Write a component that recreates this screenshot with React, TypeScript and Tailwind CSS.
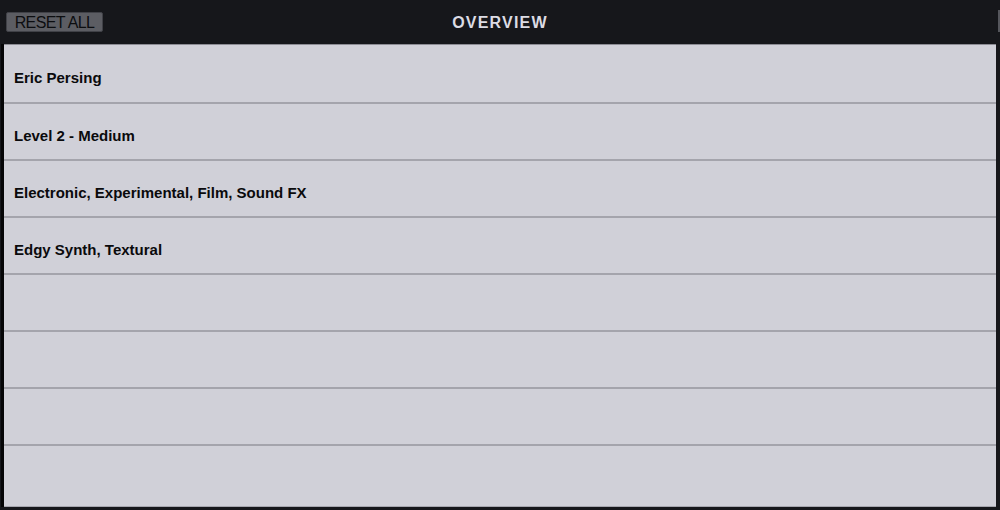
const ROWS = [
  "Eric Persing",
  "Level 2 - Medium",
  "Electronic, Experimental, Film, Sound FX",
  "Edgy Synth, Textural",
  "",
  "",
  "",
  "",
];

export default function App() {
  return (
    <div
      className="w-[1000px] h-[510px] flex flex-col bg-[#16171b] overflow-hidden"
      style={{ fontFamily: '"Liberation Sans", Arial, sans-serif' }}
    >
      {/* header */}
      <div className="relative h-[44px] shrink-0 flex items-center justify-center">
        <button className="absolute left-[6px] top-[12px] h-[20px] w-[97px] rounded-[2px] bg-[#5c5d63] border border-[#404147] text-[16px] leading-none text-[#0c0d10] tracking-[-0.6px] pt-[1px]">
          RESET ALL
        </button>
        <span className="text-[16px] font-bold tracking-[1.2px] text-[#dcdce4] mt-[1px]">OVERVIEW</span>
        <div className="absolute right-0 top-[10px] h-[22px] w-[2px] bg-[#55565c]" />
      </div>

      {/* rows */}
      <div className="flex-1 flex pl-[1px] pr-[4px] pb-[3px]">
        <div className="w-[3px] bg-[#050506]" />
        <div className="flex-1 flex flex-col bg-[#d0d0d8] border-t border-[#8c8c94] border-b border-b-[#a6a6ae]">
          {ROWS.map((r, i) => (
            <div
              key={i}
              className={`flex items-center pl-[10px] pt-[10px] text-[15px] font-bold text-[#0a0a0c] ${
                i === 0 ? "h-[59px] shrink-0" : i < ROWS.length - 1 ? "h-[57px] shrink-0" : "flex-1"
              } ${i < ROWS.length - 1 ? "border-b-2 border-[#a4a4ac]" : ""}`}
            >
              {r}
            </div>
          ))}
        </div>
      </div>
    </div>
  );
}
